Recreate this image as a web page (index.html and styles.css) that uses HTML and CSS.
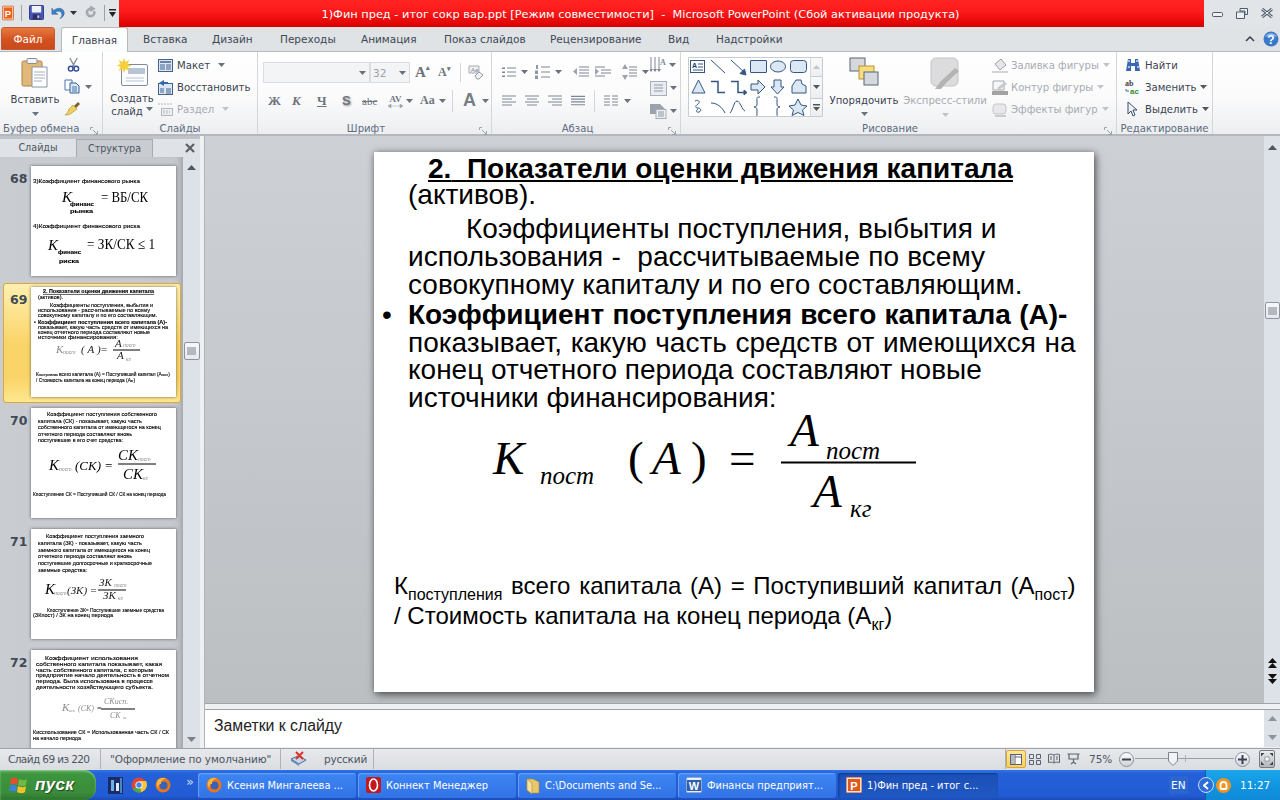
FILE: index.html
```html
<!DOCTYPE html>
<html lang="ru">
<head>
<meta charset="utf-8">
<title>PowerPoint</title>
<link rel="stylesheet" href="styles.css">
</head>
<body>
<svg class="defs" width="0" height="0">
  <symbol id="arr" viewBox="0 0 7 4"><path d="M0 0h7L3.500 4z"/></symbol>
  <symbol id="lines" viewBox="0 0 15 12"><path d="M0 1h15M0 4h15M0 7h15M0 10h15" stroke="#7d8794" stroke-width="1.200"/></symbol>
  <symbol id="ff" viewBox="0 0 16 16"><circle cx="8" cy="8" r="7.500" fill="#e8761c"/><circle cx="8.500" cy="8.500" r="4" fill="#3b62b5"/><path d="M2 5C3 1 8 0 11 2 8 2 6 4 6 7 4 7 3 8 4 11 2 10 1 7 2 5z" fill="#f6b73c"/></symbol>
</svg>

<div class="app">
  <header class="titlebar">
    <div class="qat">
      <svg class="q-ppt" width="12" height="16" viewBox="0 0 14 17"><rect x=".5" y=".5" width="13" height="16" rx="1" fill="#fde7da" stroke="#d9622b"/><rect x="2" y="2" width="10" height="13" fill="#e8641e"/><text x="7" y="13" class="ppt-letter">P</text></svg>
      <span class="qat-sep q-s1"></span>
      <svg class="q-save" width="15" height="15" viewBox="0 0 16 16"><rect x=".5" y=".5" width="15" height="15" rx="1" fill="#4a57b8" stroke="#2c3480"/><rect x="3" y="1" width="10" height="7" fill="#eef2fa"/><rect x="4" y="10" width="8" height="5" fill="#2b3061"/><rect x="9" y="11" width="2" height="3" fill="#c9cfe8"/></svg>
      <svg class="q-undo" width="15" height="15" viewBox="0 0 17 16"><path d="M3 6c3-4 11-4 12 2 .4 3-2 6-5 7 2-2 3-4 2-6-1-3-5-3-7-1l3 2H1V3z" fill="#3d7fc4" stroke="#24568f" stroke-width=".5"/></svg>
      <svg class="arr-qat" width="7" height="4"><use href="#arr"/></svg>
      <svg class="q-redo" width="14" height="15" viewBox="0 0 15 16"><path d="M12 7A5 5 0 1 1 7 3V1l5 3-5 3V5a3 3 0 1 0 3 2z" fill="#a5abb1" stroke="#8d939a" stroke-width=".5"/></svg>
      <span class="qat-sep q-s2"></span>
      <svg class="arr-custom" width="7" height="8" viewBox="0 0 7 8"><path d="M0 0h7v1.500H0zM0 3h7L3.500 8z"/></svg>
    </div>
    <div class="title-red">1)Фин пред - итог сокр вар.ppt [Режим совместимости]&nbsp; -&nbsp; Microsoft PowerPoint (Сбой активации продукта)</div>
    <div class="winbtns">
      <svg class="w-min" width="11" height="5" viewBox="0 0 11 5"><rect x=".5" y=".5" width="10" height="4" rx="1" fill="#eef0f2" stroke="#4f5c6e"/></svg>
      <svg width="12" height="11" viewBox="0 0 12 11"><path d="M4 .5h7.500v6H9V3H4zM.5 4H8.500v6.500H.5z" fill="#eef0f2" stroke="#4f5c6e"/></svg>
      <svg width="12" height="10" viewBox="0 0 12 10"><path d="M1 1l10 8M11 1L1 9" stroke="#4f5c6e" stroke-width="3"/><path d="M1 1l10 8M11 1L1 9" stroke="#eef0f2" stroke-width="1"/></svg>
    </div>
  </header>

  <nav class="tabs">
    <span class="tab-file">Файл</span>
    <span class="tab tab-active">Главная</span>
    <span class="tab t1">Вставка</span>
    <span class="tab t2">Дизайн</span>
    <span class="tab t3">Переходы</span>
    <span class="tab t4">Анимация</span>
    <span class="tab t5">Показ слайдов</span>
    <span class="tab t6">Рецензирование</span>
    <span class="tab t7">Вид</span>
    <span class="tab t8">Надстройки</span>
    <span class="tabs-right">
      <svg width="10" height="6" viewBox="0 0 10 6"><path d="M1 5l4-4 4 4" fill="none" stroke="#39424e" stroke-width="1.500"/></svg>
      <svg width="16" height="16" viewBox="0 0 16 16"><circle cx="8" cy="8" r="7.500" fill="#3a78c9"/><path d="M2 6a6.500 6 0 0 1 12 0C10 4 6 4 2 6z" fill="#8db6ea"/><text x="8" y="12.500" class="help-q">?</text></svg>
    </span>
  </nav>

  <section class="ribbon">
    <div class="group g-clip">
      <div class="gbody">
        <div class="big big-paste">
          <svg width="28" height="31" viewBox="0 0 28 31"><rect x="1" y="4" width="20" height="25" rx="1.500" fill="#e2b878" stroke="#ac834c"/><rect x="6" y="1.500" width="10" height="5" rx="1" fill="#f3f3f0" stroke="#8d8d8d"/><path d="M11 10h15v20H11z" fill="#fff" stroke="#8894a5"/><path d="M13 15h11M13 18h11M13 21h11M13 24h8" stroke="#a7b0bc"/></svg>
          <span class="big-label">Вставить</span>
          <svg class="arr" width="7" height="4"><use href="#arr"/></svg>
        </div>
        <div class="clip-small">
          <svg class="cl-cut" width="13" height="15" viewBox="0 0 14 16"><path d="M3 1l5 9M11 1L6 10" stroke="#8a8f96" stroke-width="1.500"/><circle cx="4" cy="12.500" r="2.500" fill="none" stroke="#33509a" stroke-width="1.600"/><circle cx="10" cy="12.500" r="2.500" fill="none" stroke="#33509a" stroke-width="1.600"/></svg>
          <span class="clip-row"><svg width="16" height="15" viewBox="0 0 16 15"><path d="M1 1h7v10H1z" fill="#fff" stroke="#4c74ac"/><path d="M6 4h6l3 3v7H6z" fill="#dbe8f7" stroke="#33629f"/><path d="M8 8h5M8 10h5M8 12h5" stroke="#4c74ac"/></svg><svg class="arr" width="7" height="4"><use href="#arr"/></svg></span>
          <svg width="17" height="15" viewBox="0 0 17 15"><path d="M10 5l4-4 2 2-4 4z" fill="#7b5b30"/><path d="M9 4l4 4-4 3C6 14 3 14 1 14c2-1 3-3 4-6z" fill="#f0cf5a" stroke="#a58a35" stroke-width=".6"/></svg>
        </div>
      </div>
      <div class="glabel gl-left"><span class="glabel-text">Буфер обмена</span><svg class="launcher" width="8" height="8" viewBox="0 0 8 8"><path d="M.5 3V.500H3M7.500 7.500L3 3M7.500 4v3.500H4" fill="none" stroke="#9aa3ae"/></svg></div>
    </div>

    <div class="group g-slides">
      <div class="gbody">
        <div class="big big-new">
          <svg width="31" height="29" viewBox="0 0 31 29"><rect x="4.500" y="6.500" width="26" height="21" rx="1.500" fill="#fbfcfd" stroke="#7f8b99"/><rect x="11" y="10" width="17" height="6" fill="#b9c4d4"/><path d="M9 20h18M9 23h18" stroke="#b9c4d4"/><path d="M7 0l1.500 4 4-2-2 4 4 1.500-4 1.500 2 4-4-2L7 15l-1.500-4-4 2 2-4L0 7.500l3.500-1.500-2-4 4 2z" fill="#f3cf3a"/></svg>
          <span class="big-label">Создать</span>
          <span class="big-label">слайд <svg class="arr" width="7" height="4"><use href="#arr"/></svg></span>
        </div>
        <div class="smalls">
          <div class="srow"><svg width="15" height="13" viewBox="0 0 15 13"><rect x=".5" y=".5" width="14" height="12" fill="#dde7f3" stroke="#42618c"/><path d="M2 3h11" stroke="#42618c" stroke-width="1.500"/><rect x="2" y="5" width="5" height="6" fill="#8ba5c7"/><path d="M8 6h5M8 8h5M8 10h5" stroke="#42618c"/></svg><span>Макет</span><svg class="arr" width="7" height="4"><use href="#arr"/></svg></div>
          <div class="srow"><svg width="15" height="15" viewBox="0 0 15 15"><rect x=".5" y="3.500" width="14" height="11" fill="#dde7f3" stroke="#42618c"/><rect x="2" y="8" width="4" height="5" fill="#8ba5c7"/><path d="M8 9h5M8 11h5M8 13h5" stroke="#42618c"/><path d="M6 0L1 3l5 3V4h4V2H6z" fill="#3168ae"/></svg><span>Восстановить</span></div>
          <div class="srow disabled"><svg width="15" height="13" viewBox="0 0 15 13"><rect x="3.500" y="5.500" width="11" height="7" fill="#efeff0" stroke="#b4b7bb"/><path d="M0 1h15M5 8h7M5 10h7" stroke="#b4b7bb" stroke-dasharray="2 1"/></svg><span>Раздел</span><svg class="arr" width="7" height="4"><use href="#arr"/></svg></div>
        </div>
      </div>
      <div class="glabel"><span class="glabel-text">Слайды</span></div>
    </div>

    <div class="group g-font">
      <div class="gbody column">
        <div class="font-row1">
          <span class="combo c-name"><svg class="arr" width="7" height="4"><use href="#arr"/></svg></span>
          <span class="combo c-size"><span>32</span><svg class="arr" width="7" height="4"><use href="#arr"/></svg></span>
          <span class="fglyph f-a1">A<sup>▴</sup></span>
          <span class="fglyph f-a2">A<sup>▾</sup></span>
          <span class="vsep"></span>
          <svg width="16" height="15" viewBox="0 0 16 15"><path d="M1 1h10v7H1z" fill="#eef0f3" stroke="#a5abb3"/><text x="3" y="7" class="clear-txt">Aa</text><path d="M7 11l4-4 4 3-4 4H9z" fill="#f2f2f4" stroke="#9298a2"/></svg>
        </div>
        <div class="font-row2">
          <span class="fb fb1">Ж</span><span class="fb fb2"><i>К</i></span><span class="fb fb3"><u>Ч</u></span><span class="fb fb4">S</span><span class="fb fb5"><s>abc</s></span>
          <span class="fb6"><span class="av">AV</span><svg width="15" height="4" viewBox="0 0 15 4"><path d="M0 2l3-2v4zM15 2l-3-2v4zM3 2h9" fill="#9ba1a9" stroke="#9ba1a9" stroke-width=".5"/></svg></span><svg class="arr" width="7" height="4"><use href="#arr"/></svg>
          <span class="fb fb7">Aa</span><svg class="arr" width="7" height="4"><use href="#arr"/></svg>
          <span class="vsep short"></span>
          <span class="fb fb8">A</span><svg class="arr" width="7" height="4"><use href="#arr"/></svg>
        </div>
      </div>
      <div class="glabel gl-launch"><span class="glabel-text">Шрифт</span><svg class="launcher" width="8" height="8" viewBox="0 0 8 8"><path d="M.5 3V.500H3M7.500 7.500L3 3M7.500 4v3.500H4" fill="none" stroke="#9aa3ae"/></svg></div>
    </div>

    <div class="group g-para">
      <div class="gbody">
        <div class="para-main">
          <div class="para-row1">
            <svg class="p1" width="14" height="12" viewBox="0 0 14 12"><path d="M0 1.500h3v1.500H0zM0 5.500h3V7H0zM0 9.500h3V11H0z" fill="#7d8794"/><path d="M5 2h9M5 6h9M5 10h9" stroke="#7d8794"/></svg><svg class="arr" width="7" height="4"><use href="#arr"/></svg>
            <svg class="p2" width="15" height="14" viewBox="0 0 15 14"><path d="M6 2h9M6 7h9M6 12h9" stroke="#7d8794"/><path d="M1 0h2v4H1zM0 5.500h3V9H0zM0 10.500h3V14H0z" fill="#8f97a2"/></svg><svg class="arr" width="7" height="4"><use href="#arr"/></svg>
            <svg class="p3" width="16" height="12" viewBox="0 0 16 12"><path d="M6 1h10M6 4h10M6 7h10M6 10h10" stroke="#7d8794"/><path d="M0 5.500L4 2v7z" fill="#9ca3ad"/></svg>
            <svg class="p4" width="16" height="12" viewBox="0 0 16 12"><path d="M0 1h10M6 4h10M6 7h10M0 10h10" stroke="#7d8794"/><path d="M4 5.500L0 2v7z" fill="#9ca3ad"/></svg>
            <svg class="p5" width="15" height="16" viewBox="0 0 15 16"><path d="M7 3h8M7 6h8M7 9h8M7 12h8" stroke="#7d8794"/><path d="M3 0l3 5H0zM3 16l3-5H0z" fill="#9ca3ad"/></svg><svg class="arr" width="7" height="4"><use href="#arr"/></svg>
          </div>
          <div class="para-row2">
            <svg width="14" height="12" viewBox="0 0 14 12"><path d="M0 1h14M0 4h10M0 7h14M0 10h10" stroke="#7d8794" stroke-width="1.200"/></svg>
            <svg width="14" height="12" viewBox="0 0 14 12"><path d="M0 1h14M2 4h10M0 7h14M2 10h10" stroke="#7d8794" stroke-width="1.200"/></svg>
            <svg width="14" height="12" viewBox="0 0 14 12"><path d="M0 1h14M4 4h10M0 7h14M4 10h10" stroke="#7d8794" stroke-width="1.200"/></svg>
            <svg width="14" height="12"><use href="#lines"/></svg>
            <span class="vsep short"></span>
            <svg width="14" height="12" viewBox="0 0 14 12"><path d="M0 1h6M8 1h6M0 4h6M8 4h6M0 7h6M8 7h6M0 10h6M8 10h6" stroke="#7d8794" stroke-width="1.200"/></svg><svg class="arr" width="7" height="4"><use href="#arr"/></svg>
          </div>
        </div>
        <div class="para-side">
          <span class="ps-row"><svg width="16" height="17" viewBox="0 0 16 17"><path d="M1 0v14M5 0v14M9 0v14" stroke="#7d8794"/><path d="M-1 12l2 3 2-3M3 12l2 3 2-3M7 12l2 3 2-3" fill="#7d8794"/><text x="10" y="8" class="dir-a">A</text></svg><svg class="arr" width="7" height="4"><use href="#arr"/></svg></span>
          <span class="ps-row"><svg width="17" height="15" viewBox="0 0 17 15"><rect x=".5" y=".5" width="16" height="14" fill="#e9edf1" stroke="#a7afb8"/><path d="M4 4h9M4 7h9M4 10h9" stroke="#8f98a3"/></svg><svg class="arr" width="7" height="4"><use href="#arr"/></svg></span>
          <span class="ps-row"><svg width="17" height="15" viewBox="0 0 17 15"><path d="M0 0h10l5 5-5 5H0z" fill="#9ba2ab"/><rect x="6" y="5.500" width="10" height="9" fill="#eef0f3" stroke="#a7afb8"/><path d="M8 8h6M8 10h6M8 12h6" stroke="#8f98a3"/></svg><svg class="arr" width="7" height="4"><use href="#arr"/></svg></span>
        </div>
      </div>
      <div class="glabel gl-launch"><span class="glabel-text">Абзац</span><svg class="launcher" width="8" height="8" viewBox="0 0 8 8"><path d="M.5 3V.500H3M7.500 7.500L3 3M7.500 4v3.500H4" fill="none" stroke="#9aa3ae"/></svg></div>
    </div>

    <div class="group g-draw">
      <div class="gbody">
        <div class="gallery">
          <svg class="shapes" width="121" height="58" viewBox="0 0 121 58" fill="#dbe7f5" stroke="#34567f">
            <rect x="1.500" y="2.500" width="14" height="12" fill="#fff"/><text x="3" y="10" class="g-a">A</text><path d="M9 6h5M9 9h5M4 12h10" fill="none"/>
            <path d="M22 2l14 13" fill="none"/>
            <path d="M42 2l13 12" fill="none"/><path d="M57 17l-6-1.500 4.500-4.500z" fill="#34567f"/>
            <rect x="61.500" y="2.500" width="16" height="12" rx=".5"/>
            <ellipse cx="89" cy="8.500" rx="7.500" ry="5.500"/>
            <rect x="101.500" y="2.500" width="16" height="12" rx="3"/>
            <path d="M9.500 22L16 35H3z"/>
            <path d="M22 23.500h7v11h7" fill="none" stroke-width="1.500"/>
            <path d="M42 23.500h7v11h6" fill="none" stroke-width="1.500"/><path d="M55 32l3 2.500-3 2.500z" fill="#34567f"/>
            <path d="M62 26h7v-4l7 7-7 7v-4h-7z"/>
            <path d="M85 22h7v7h3l-6.500 7-6.500-7h3z"/>
            <path d="M103 28l4-6h5l1 4 4 2v7h-14z"/>
            <path d="M6 43c3-2 6 1 3 3s-3 4 0 4 4 3 1 4-3-2-1-3" fill="none"/>
            <path d="M22 45c6 0 11 4 14 10" fill="none"/>
            <path d="M41 55c3-3 4-12 7-12s5 9 8 10" fill="none"/>
            <path d="M71 42c-4 0-3 1-3 4v3c0 2-1 3-3 3 2 0 3 1 3 3v3c0 3-1 4 3 4" fill="none" transform="translate(0 -3)"/>
            <path d="M85 42c4 0 3 1 3 4v3c0 2 1 3 3 3-2 0-3 1-3 3v3c0 3 1 4-3 4" fill="none" transform="translate(0 -3)"/>
            <path d="M109 41l3 6 6 1-4.500 4 1.500 5.500-6-3-6 3 1.500-5.500-4.500-4 6-1z"/>
          </svg>
          <div class="gal-scroll">
            <span class="gs gs-up"><svg width="7" height="4" viewBox="0 0 7 4"><path d="M0 4h7L3.500 0z" fill="#c2c7ce"/></svg></span>
            <span class="gs gs-mid"><svg class="arr" width="7" height="4"><use href="#arr"/></svg></span>
            <span class="gs"><svg width="7" height="7" viewBox="0 0 7 7"><path d="M0 0h7v1.500H0zM0 3h7L3.500 7z" fill="#555"/></svg></span>
          </div>
        </div>
        <div class="big big-order">
          <svg class="ord" width="30" height="29" viewBox="0 0 30 29"><rect x="1" y="1" width="15" height="13" fill="#d5d9de" stroke="#596474"/><rect x="10" y="9" width="15" height="13" fill="#f6dd80" stroke="#b3962f"/><rect x="15" y="15" width="14" height="13" fill="#d5d9de" stroke="#596474"/></svg>
          <span class="big-label">Упорядочить</span>
          <svg class="arr" width="7" height="4"><use href="#arr"/></svg>
        </div>
        <div class="big big-styles disabled">
          <svg width="30" height="32" viewBox="0 0 30 32"><rect x="1" y="1" width="27" height="28" rx="5" fill="#dcdbdd" stroke="#c4c3c6"/><path d="M29 14L16 26l-5 6h-6l6-8 14-13z" fill="#b6b4b2"/></svg>
          <span class="big-label">Экспресс-стили</span>
          <svg class="arr" width="7" height="4"><use href="#arr"/></svg>
        </div>
        <div class="smalls shape-fx disabled">
          <div class="srow"><svg width="16" height="15" viewBox="0 0 16 15"><path d="M3 6l6-5 5 6-6 5z" fill="#e7e7e9" stroke="#9c9ea2"/><path d="M0 13h16v2H0z" fill="#d3d4d6"/></svg><span>Заливка фигуры</span><svg class="arr" width="7" height="4"><use href="#arr"/></svg></div>
          <div class="srow"><svg width="16" height="15" viewBox="0 0 16 15"><path d="M1 1h11v9H1z" fill="#f7f7f8" stroke="#a4a6aa"/><path d="M5 8l8-6 2 2-8 6z" fill="#c8c9cc"/><path d="M0 11h16v4H0z" fill="#a3a3a3"/></svg><span>Контур фигуры</span><svg class="arr" width="7" height="4"><use href="#arr"/></svg></div>
          <div class="srow"><svg width="16" height="15" viewBox="0 0 16 15"><rect x="1" y="2" width="13" height="10" rx="3" fill="#e8e8ea" stroke="#c4c5c8"/><path d="M3 14h11" stroke="#ccc" stroke-width="2"/></svg><span>Эффекты фигур</span><svg class="arr" width="7" height="4"><use href="#arr"/></svg></div>
        </div>
      </div>
      <div class="glabel gl-launch"><span class="glabel-text">Рисование</span><svg class="launcher" width="8" height="8" viewBox="0 0 8 8"><path d="M.5 3V.500H3M7.500 7.500L3 3M7.500 4v3.500H4" fill="none" stroke="#9aa3ae"/></svg></div>
    </div>

    <div class="group g-edit">
      <div class="gbody">
        <div class="smalls edit-rows">
          <div class="srow"><svg width="16" height="14" viewBox="0 0 16 14"><path d="M3 1h3v4h4V1h3l2 12H10V8H6v5H1z" fill="#3869b0"/><path d="M3 3h2M11 3h2M3 9h2M12 9h2" stroke="#c7dbf3" stroke-width="1.500"/></svg><span>Найти</span></div>
          <div class="srow"><svg class="abac" width="16" height="15" viewBox="0 0 16 15"><text x="0" y="6" class="ab">ab</text><text x="5" y="14" class="ac">ac</text><path d="M1 9v2h3" fill="none" stroke="#3869b0"/></svg><span>Заменить</span><svg class="arr" width="7" height="4"><use href="#arr"/></svg></div>
          <div class="srow"><svg width="16" height="15" viewBox="0 0 16 15"><path d="M3 0v12l3-3 2 5 2-1-2-5h4z" fill="#eef3fa" stroke="#3a4c66"/></svg><span>Выделить</span><svg class="arr" width="7" height="4"><use href="#arr"/></svg></div>
        </div>
      </div>
      <div class="glabel"><span class="glabel-text">Редактирование</span></div>
    </div>
  </section>

  <main class="main">
    <aside class="panel">
      <div class="panel-tabs">
        <span class="ptab ptab-on">Слайды</span>
        <span class="ptab">Структура</span>
        <svg class="panel-x" width="10" height="10" viewBox="0 0 10 10"><path d="M1 1l8 8M9 1L1 9" stroke="#5a6068" stroke-width="2.200"/></svg>
      </div>
      <div class="panel-body">
        <div class="thumbs">
          <div class="trow">
            <span class="tnum">68</span>
            <svg class="thumb" width="145" height="110" viewBox="0 0 145 110">
              <text x="2" y="17" class="tt" textLength="107" lengthAdjust="spacingAndGlyphs">3)Коэффициент   финансового   рынка</text>
              <text x="31" y="36" class="tf ti">К</text><text x="39" y="40" class="tt tb" textLength="24" lengthAdjust="spacingAndGlyphs">финанс</text><text x="39" y="47" class="tt tb" textLength="23" lengthAdjust="spacingAndGlyphs">рынка</text><text x="70" y="36" class="tf" textLength="47" lengthAdjust="spacingAndGlyphs">= ВБ/СК</text>
              <text x="2" y="62" class="tt" textLength="107" lengthAdjust="spacingAndGlyphs">4)Коэффициент   финансового   риска</text>
              <text x="17" y="84" class="tf ti">К</text><text x="27" y="88" class="tt tb" textLength="23" lengthAdjust="spacingAndGlyphs">финанс</text><text x="28" y="97" class="tt tb" textLength="20" lengthAdjust="spacingAndGlyphs">риска</text><text x="56" y="83" class="tf" textLength="68" lengthAdjust="spacingAndGlyphs">= ЗК/СК ≤ 1</text>
            </svg>
          </div>
          <div class="trow trow-sel">
            <span class="tnum">69</span>
            <svg class="thumb" width="145" height="110" viewBox="0 0 145 110">
              <text x="12" y="6" class="tt tb tu" textLength="111" lengthAdjust="spacingAndGlyphs">2.  Показатели оценки движения капитала</text>
              <text x="7" y="12" class="tt" textLength="25" lengthAdjust="spacingAndGlyphs">(активов).</text>
              <text x="19" y="20" class="tt" textLength="103" lengthAdjust="spacingAndGlyphs">Коэффициенты поступления, выбытия и</text>
              <text x="7" y="25" class="tt" textLength="112" lengthAdjust="spacingAndGlyphs">использования -  рассчитываемые по всему</text>
              <text x="7" y="30" class="tt" textLength="119" lengthAdjust="spacingAndGlyphs">совокупному капиталу и по его составляющим.</text>
              <text x="3" y="37" class="tt tb">•</text>
              <text x="7" y="37" class="tt tb" textLength="129" lengthAdjust="spacingAndGlyphs">Коэффициент поступления всего капитала (А)-</text>
              <text x="7" y="42" class="tt" textLength="130" lengthAdjust="spacingAndGlyphs">показывает, какую часть средств от имеющихся на</text>
              <text x="7" y="47" class="tt" textLength="112" lengthAdjust="spacingAndGlyphs">конец отчетного периода составляют новые</text>
              <text x="7" y="52" class="tt" textLength="80" lengthAdjust="spacingAndGlyphs">источники финансирования:</text>
              <text x="25" y="66" class="tf5 ti tgrey">К</text><text x="32" y="67" class="tt ti tgrey">пост</text><text x="50" y="66" class="tf5 ti">( А )</text><text x="70" y="66" class="tf5">=</text>
              <text x="84" y="60" class="tf5 ti">А</text><text x="92" y="60" class="tt ti tgrey">пост</text><path d="M82 63h27" stroke="#000"/><text x="86" y="72" class="tf5 ti">А</text><text x="95" y="74" class="tt ti tgrey">кг</text>
              <text x="5" y="89" class="t48" textLength="134" lengthAdjust="spacingAndGlyphs">К<tspan class="tsub">поступления</tspan> всего капитала (А) = Поступивший капитал (А<tspan class="tsub">пост</tspan>)</text>
              <text x="5" y="95" class="t48" textLength="99" lengthAdjust="spacingAndGlyphs">/ Стоимость капитала на конец периода (А<tspan class="tsub">кг</tspan>)</text>
            </svg>
          </div>
          <div class="trow">
            <span class="tnum">70</span>
            <svg class="thumb" width="145" height="110" viewBox="0 0 145 110">
              <text x="16" y="8" class="tt" textLength="110" lengthAdjust="spacingAndGlyphs">Коэффициент   поступления   собственного</text>
              <text x="7" y="15" class="tt" textLength="104" lengthAdjust="spacingAndGlyphs">капитала  (СК)  - показывает,  какую  часть</text>
              <text x="7" y="21" class="tt" textLength="123" lengthAdjust="spacingAndGlyphs">собственного капитала от имеющегося  на конец</text>
              <text x="7" y="28" class="tt" textLength="94" lengthAdjust="spacingAndGlyphs">отчетного  периода составляют вновь</text>
              <text x="7" y="34" class="tt" textLength="85" lengthAdjust="spacingAndGlyphs">поступившие в его счет средства:</text>
              <text x="18" y="62" class="tf ti">К</text><text x="28" y="63" class="tt ti tgrey">пост</text><text x="44" y="62" class="tf3 ti">(СК) =</text>
              <text x="87" y="52" class="tf ti">СК</text><text x="107" y="53" class="tt ti tgrey">пост</text><path d="M87 56h38" stroke="#000"/><text x="92" y="71" class="tf ti">СК</text><text x="112" y="72" class="tt ti tgrey">кг</text>
              <text x="2" y="88" class="tt" textLength="133" lengthAdjust="spacingAndGlyphs">Кпоступление СК = Поступивший СК / СК на конец периода</text>
            </svg>
          </div>
          <div class="trow">
            <span class="tnum">71</span>
            <svg class="thumb" width="145" height="110" viewBox="0 0 145 110">
              <text x="15" y="9" class="tt" textLength="98" lengthAdjust="spacingAndGlyphs">Коэффициент   поступления   заемного</text>
              <text x="7" y="16" class="tt" textLength="104" lengthAdjust="spacingAndGlyphs">капитала  (ЗК)  - показывает,  какую  часть</text>
              <text x="7" y="23" class="tt" textLength="112" lengthAdjust="spacingAndGlyphs">заемного  капитала  от имеющегося на конец</text>
              <text x="7" y="29" class="tt" textLength="94" lengthAdjust="spacingAndGlyphs">отчетного  периода составляют вновь</text>
              <text x="7" y="36" class="tt" textLength="114" lengthAdjust="spacingAndGlyphs">поступившие долгосрочные и краткосрочные</text>
              <text x="7" y="43" class="tt" textLength="49" lengthAdjust="spacingAndGlyphs">заемные  средства:</text>
              <text x="14" y="65" class="tf ti">К</text><text x="23" y="66" class="tt ti tgrey">пост</text><text x="36" y="65" class="tf5 ti">(ЗК) =</text>
              <text x="68" y="57" class="tf5 ti">ЗК</text><text x="83" y="58" class="tt ti tgrey">пост</text><path d="M67 61h28" stroke="#000"/><text x="72" y="70" class="tf5 ti">ЗК</text><text x="87" y="71" class="tt ti tgrey">кг</text>
              <text x="16" y="83" class="tt" textLength="117" lengthAdjust="spacingAndGlyphs">Кпоступление ЗК= Поступившие заемные средства</text>
              <text x="2" y="88" class="tt" textLength="80" lengthAdjust="spacingAndGlyphs">(ЗКпост) / ЗК на конец периода</text>
            </svg>
          </div>
          <div class="trow">
            <span class="tnum">72</span>
            <svg class="thumb" width="145" height="110" viewBox="0 0 145 110">
              <text x="14" y="10" class="tt" textLength="93" lengthAdjust="spacingAndGlyphs">Коэффициент использования</text>
              <text x="5" y="16" class="tt" textLength="126" lengthAdjust="spacingAndGlyphs">собственного капитала показывает,   какая</text>
              <text x="5" y="22" class="tt" textLength="117" lengthAdjust="spacingAndGlyphs">часть собственного   капитала, с которым</text>
              <text x="5" y="27" class="tt" textLength="133" lengthAdjust="spacingAndGlyphs">предприятие  начало деятельность  в отчетном</text>
              <text x="5" y="33" class="tt" textLength="117" lengthAdjust="spacingAndGlyphs">периода.  Была  использована  в процессе</text>
              <text x="5" y="39" class="tt" textLength="117" lengthAdjust="spacingAndGlyphs">деятельности  хозяйствующего  субъекта.</text>
              <text x="31" y="61" class="tf5 ti tgrey">К</text><text x="38" y="62" class="tsm ti tgrey">исп</text><text x="47" y="61" class="tf4 ti tgrey">(СК)</text><text x="66" y="61" class="tf4">=</text>
              <text x="73" y="54" class="tf4 ti tgrey">СКисп.</text><path d="M70 59h34" stroke="#000"/><text x="79" y="68" class="tf4 ti tgrey">СК</text><text x="92" y="69" class="tsm ti tgrey">кг</text>
              <text x="2" y="84" class="tt" textLength="136" lengthAdjust="spacingAndGlyphs">Кисспользование СК = Использованная часть СК / СК</text>
              <text x="2" y="90" class="tt" textLength="48" lengthAdjust="spacingAndGlyphs">на начало периода</text>
            </svg>
          </div>
        </div>
        <div class="vscroll vs-left">
          <svg width="9" height="5" viewBox="0 0 9 5"><path d="M0 5h9L4.500 0z" fill="#50565e"/></svg>
          <span class="vthumb vt-left"><svg width="9" height="8" viewBox="0 0 9 8"><path d="M0 1h9M0 3h9M0 5h9M0 7h9" stroke="#7c8187"/></svg></span>
          <svg class="vs-down" width="9" height="5" viewBox="0 0 9 5"><path d="M0 0h9L4.500 5z" fill="#7c8187"/></svg>
        </div>
      </div>
    </aside>

    <div class="work">
      <div class="work-top">
        <div class="stage">
          <article class="slide">
            <p class="ln title-ln"><u><b>2.</b>&nbsp; <b>Показатели оценки движения капитала</b></u></p>
            <p class="ln ind tight">(активов).</p>
            <p class="ln ind ind2 gap1">Коэффициенты поступления, выбытия и</p>
            <p class="ln ind ws">использования -&nbsp; рассчитываемые по всему</p>
            <p class="ln ind">совокупному капиталу и по его составляющим.</p>
            <p class="ln ind gap2 bullet ws"><b>Коэффициент поступления всего капитала (А)-</b></p>
            <p class="ln ind ws2">показывает, какую часть средств от имеющихся на</p>
            <p class="ln ind">конец отчетного периода составляют новые</p>
            <p class="ln ind">источники финансирования:</p>
            <svg class="formula" width="470" height="115" viewBox="0 0 470 115">
              <text x="1" y="62" class="fm fm-i">К</text>
              <text x="48" y="72" class="fm-s fm-i">пост</text>
              <text x="136" y="62" class="fm">(</text>
              <text x="160" y="62" class="fm fm-i">А</text>
              <text x="199" y="62" class="fm">)</text>
              <text x="237" y="62" class="fm">=</text>
              <text x="298" y="34" class="fm fm-i">А</text>
              <text x="334" y="47" class="fm-s fm-i">пост</text>
              <path d="M289 50.500h135" stroke="#000" stroke-width="2"/>
              <text x="321" y="95" class="fm fm-i">А</text>
              <text x="358" y="105" class="fm-s fm-i">кг</text>
            </svg>
            <p class="note note1">К<sub>поступления</sub> всего капитала (А) = Поступивший капитал (А<sub>пост</sub>)</p>
            <p class="note">/ Стоимость капитала на конец периода (А<sub>кг</sub>)</p>
          </article>
        </div>
        <div class="vscroll vs-right">
          <svg width="9" height="5" viewBox="0 0 9 5"><path d="M0 5h9L4.500 0z" fill="#50565e"/></svg>
          <span class="vthumb vt-right"><svg width="9" height="8" viewBox="0 0 9 8"><path d="M0 1h9M0 3h9M0 5h9M0 7h9" stroke="#7c8187"/></svg></span>
          <span class="dbl"><svg width="9" height="10" viewBox="0 0 9 10"><path d="M0 5h9L4.500 0zM0 10h9L4.500 5z" fill="#111"/></svg><svg width="9" height="10" viewBox="0 0 9 10"><path d="M0 0h9L4.500 5zM0 5h9L4.500 10z" fill="#111"/></svg></span>
        </div>
      </div>
      <div class="notes">
        <div class="notes-text">Заметки к слайду</div>
        <div class="vscroll vs-notes">
          <svg width="9" height="5" viewBox="0 0 9 5"><path d="M0 5h9L4.500 0z" fill="#8d9598"/></svg>
          <svg width="9" height="5" viewBox="0 0 9 5"><path d="M0 0h9L4.500 5z" fill="#8d9598"/></svg>
        </div>
      </div>
    </div>
  </main>

  <footer class="status">
    <span class="st st1">Слайд 69 из 220</span>
    <span class="st st2">"Оформление по умолчанию"</span>
    <span class="st st3"><svg width="17" height="16" viewBox="0 0 17 16"><path d="M1 8l7-3 8 4-7 4z" fill="#c7d5e8" stroke="#4d6a95"/><path d="M1 8v2l8 5v-2z" fill="#6f8db8"/><path d="M6 1l7 7M13 1L6 8" stroke="#d8352a" stroke-width="2"/></svg><span class="lang">русский</span></span>
    <span class="st-right">
      <span class="view view-on"><svg width="12" height="11" viewBox="0 0 12 11"><rect x=".5" y=".5" width="11" height="10" fill="#fff" stroke="#5a6471"/><path d="M5 1v9M5 3h6" stroke="#5a6471"/><rect x="1" y="1" width="3" height="9" fill="#b5bcc6"/></svg></span>
      <span class="view"><svg width="12" height="11" viewBox="0 0 12 11"><path d="M.5.5h4v4h-4zM7.500.5h4v4h-4zM.5 6.500h4v4h-4zM7.500 6.500h4v4h-4z" fill="none" stroke="#5a6471"/></svg></span>
      <span class="view"><svg width="12" height="12" viewBox="0 0 12 12"><path d="M6 2C4 1 2 1 .5 1.500v8c2-.5 4-.5 5.500.5 1.500-1 3.500-1 5.500-.5v-8C10 1 8 1 6 2zM6 2v8M2 4h2M2 6h2M8 4h2M8 6h2" fill="none" stroke="#5a6471"/></svg></span>
      <span class="view"><svg width="13" height="12" viewBox="0 0 13 12"><path d="M.5 1h12M2 1v5h9V1M6.500 6v3M4 11l2.500-2L9 11" fill="none" stroke="#5a6471" stroke-width="1.200"/></svg></span>
      <span class="zoom-pct">75%</span>
      <span class="zbtn"><svg width="9" height="3"><path d="M0 1.500h9" stroke="#39424e" stroke-width="2"/></svg></span>
      <span class="slider"><span class="tick"></span><svg class="sthumb" width="10" height="14" viewBox="0 0 10 14"><path d="M.5.500h9V9L5 13.500.5 9z" fill="#f1f3f5" stroke="#7b838c"/></svg></span>
      <span class="zbtn"><svg width="9" height="9"><path d="M0 4.500h9M4.500 0v9" stroke="#39424e" stroke-width="2"/></svg></span>
      <span class="fit"><svg width="12" height="12" viewBox="0 0 12 12"><path d="M0 0h3.500L0 3.500zM12 0H8.500L12 3.500zM0 12h3.500L0 8.500zM12 12H8.500L12 8.500z" fill="#3d444c"/><rect x="4" y="4" width="4" height="4" fill="#fff" stroke="#555" stroke-width=".5"/></svg></span>
    </span>
  </footer>

  <div class="taskbar">
    <div class="start">
      <svg width="20" height="18" viewBox="0 0 20 18"><path d="M2 3c3-2 5-1 7 0L8 9C6 8 4 7 1 9z" fill="#e84d2e"/><path d="M10 3c2 1 5 2 8 0l-1 6c-3 2-6 1-8 0z" fill="#70b943"/><path d="M1 10c3-2 5-1 7 0l-1 6c-2-1-4-2-7 0z" fill="#3a83dd"/><path d="M9 10c2 1 5 2 8 0l-1 6c-3 2-6 1-8 0z" fill="#f5c22e"/></svg>
      <span class="start-txt">пуск</span>
    </div>
    <div class="quick">
      <svg width="15" height="17" viewBox="0 0 15 17"><rect width="15" height="17" fill="#1d2a68"/><rect x="3" y="3" width="3" height="11" fill="#6bb2e8"/><rect x="8" y="6" width="3" height="8" fill="#dfe9f2"/><rect x="12" y="1" width="2" height="15" fill="#4a85c5"/></svg>
      <svg width="16" height="16" viewBox="0 0 16 16"><circle cx="8" cy="8" r="7.500" fill="#dc4437"/><path d="M8 8L1.500 12A7.500 7.500 0 0 0 11 15z" fill="#4ca84f"/><path d="M8 4h7a7.500 7.500 0 0 1-5 11z" fill="#f6c636"/><circle cx="8" cy="8" r="3.600" fill="#fff"/><circle cx="8" cy="8" r="2.700" fill="#4985e8"/></svg>
      <svg width="16" height="16"><use href="#ff"/></svg>
      <span class="chev">»</span>
    </div>
    <div class="tasks">
      <span class="task"><svg width="16" height="16"><use href="#ff"/></svg><span class="task-t">Ксения Мингалеева ...</span></span>
      <span class="task"><svg width="15" height="16" viewBox="0 0 15 16"><rect width="15" height="16" rx="2" fill="#c2191f"/><ellipse cx="7.500" cy="8" rx="4" ry="6" fill="none" stroke="#fff" stroke-width="1.600"/></svg><span class="task-t">Коннект Менеджер</span></span>
      <span class="task"><svg width="14" height="17" viewBox="0 0 14 17"><path d="M1 2h6l6 3v11H5l-4-3z" fill="#e8c869" stroke="#a8873a" stroke-width=".6"/><path d="M1 2l5 4v11l-5-4z" fill="#f6e09a" stroke="#a8873a" stroke-width=".6"/></svg><span class="task-t">C:\Documents and Se...</span></span>
      <span class="task"><svg width="16" height="16" viewBox="0 0 16 16"><rect width="16" height="16" fill="#e9eff7" stroke="#3a64a7"/><rect x="1" y="3" width="14" height="11" fill="#2c5fae"/><text x="8" y="12.500" class="w-letter">W</text></svg><span class="task-t">Финансы предприят...</span></span>
      <span class="task task-on"><svg width="16" height="16" viewBox="0 0 16 16"><rect width="16" height="16" rx="1" fill="#fbe3d5" stroke="#c9481b"/><rect x="2" y="2" width="12" height="12" fill="#dd5a1c"/><text x="8" y="12.500" class="w-letter">P</text></svg><span class="task-t">1)Фин пред - итог с...</span></span>
    </div>
    <span class="en">EN</span>
    <div class="tray">
      <span class="tray-back"><svg width="6" height="9" viewBox="0 0 6 9"><path d="M5 1L1 4.500 5 8" fill="none" stroke="#fff" stroke-width="2"/></svg></span>
      <svg width="15" height="15" viewBox="0 0 15 15"><circle cx="7.500" cy="7.500" r="7.500" fill="#f3941e"/><path d="M4.500 11V7a3 3 0 0 1 6 0v4M4.500 11h6" fill="none" stroke="#fff" stroke-width="1.800"/></svg>
      <span class="clock">11:27</span>
    </div>
  </div>
</div>
</body>
</html>
```

FILE: styles.css
```css
* { box-sizing: border-box; }
html, body { margin: 0; padding: 0; }
body { width: 1280px; height: 800px; overflow: hidden; font-family: "DejaVu Sans", sans-serif; font-size: 10.5px; color: #3b4350; background: #e2e5e8; }
p { margin: 0; }
svg { display: block; flex: none; }
.defs { position: absolute; }
.arr { fill: #69717c; flex: none; }
.app { display: flex; flex-direction: column; width: 1280px; height: 800px; }

/* title bar */
.titlebar { display: flex; height: 27px; background: #e2e5e8; }
.qat { width: 119px; display: flex; align-items: center; padding-bottom: 2px; }
.qat-sep { width: 1px; height: 16px; background: #9aa1aa; }
.q-ppt { margin-left: 2px; }
.q-s1 { margin-left: 7px; }
.q-save { margin-left: 7px; }
.q-undo { margin-left: 7px; }
.arr-qat { fill: #333; margin-left: 4px; }
.q-redo { margin-left: 7px; }
.q-s2 { margin-left: 6px; }
.arr-custom { fill: #222; margin-left: 4px; }
.ppt-letter, .w-letter { font: bold 11px "Liberation Sans", sans-serif; fill: #fff; text-anchor: middle; }
.title-red { width: 1085px; background: linear-gradient(#ff2323, #ff1b1b 40%, #d90000); color: #fff; font-size: 11.350px; line-height: 29px; text-align: center; white-space: nowrap; padding-right: 42px; }
.winbtns { flex: 1; display: flex; gap: 13px; padding: 8px 0 0 8px; align-items: flex-start; }
.w-min { margin-top: 4px; }

/* tabs */
.tabs { display: flex; height: 25px; background: #dfe3e6; border-bottom: 1px solid #b5b9be; position: relative; align-items: flex-end; }
.tab-file { width: 54px; margin-left: 1px; height: 23px; margin-bottom: 1px; background: linear-gradient(#e77a40, #d3521f 55%, #c94a1c); border: 1px solid #c55a30; border-radius: 3px 3px 0 0; color: #fff; text-align: center; line-height: 22px; }
.tab { height: 24px; line-height: 24px; white-space: nowrap; color: #3e4754; }
.tab-active { width: 67px; margin-left: 6px; margin-bottom: -1px; height: 25px; background: linear-gradient(#fff, #fbfcfd); border: 1px solid #b5b9be; border-bottom: 0; border-radius: 3px 3px 0 0; text-align: center; }
.t1 { margin-left: 15px; width: 69px; }
.t2 { width: 68px; }
.t3 { width: 81px; }
.t4 { width: 83px; }
.t5 { width: 106px; }
.t6 { width: 118px; }
.t7 { width: 48px; }
.t8 { width: 90px; }
.tabs-right { margin-left: auto; display: flex; align-items: center; gap: 8px; height: 24px; padding-right: 1px; }
.help-q { font: bold 12px "Liberation Sans", sans-serif; fill: #fff; text-anchor: middle; }

/* ribbon */
.ribbon { display: flex; height: 85px; background: linear-gradient(#fff, #fbfbfc 55%, #eceef0); border-bottom: 2px solid #b4b8bd; font-size: 10.100px; }
.group { display: flex; flex-direction: column; border-right: 1px solid #d3d6da; flex: none; }
.gbody { flex: 1; display: flex; min-height: 0; }
.gbody.column { flex-direction: column; }
.glabel { height: 14px; position: relative; text-align: center; line-height: 17px; color: #5d6b80; white-space: nowrap; }
.gl-left { text-align: left; padding-left: 3px; }
.gl-launch { padding-right: 17px; }
.launcher { position: absolute; right: 4px; bottom: -1px; }
.g-clip { width: 103px; }
.g-slides { width: 155px; }
.g-font { width: 234px; }
.g-para { width: 189px; }
.g-draw { width: 436px; }
.g-edit { width: 96px; }
.big { display: flex; flex-direction: column; align-items: center; flex: none; }
.big-label { line-height: 13px; white-space: nowrap; display: flex; align-items: center; gap: 3px; }
.big-paste { width: 60px; margin-left: 5px; padding-top: 5px; }
.big-paste svg:first-child { margin-bottom: 5px; }
.big-paste .arr { margin-top: 6px; }
.clip-small { display: flex; flex-direction: column; align-items: flex-start; gap: 7px; padding: 5px 0 0 0; margin-left: -1px; }
.cl-cut { margin-left: 3px; }
.clip-row { display: flex; align-items: center; gap: 5px; }
.big-new { width: 52px; margin-left: 3px; padding-top: 6px; }
.big-new svg:first-child { margin-bottom: 5px; }
.smalls { display: flex; flex-direction: column; padding-top: 2px; }
.srow { height: 22px; display: flex; align-items: center; gap: 4px; white-space: nowrap; }
.srow .arr { margin-left: 1px; }
.g-slides .srow .arr { margin-left: 4px; }
.disabled { color: #a7abb1; }
.disabled .arr { fill: #c0c4c9; }

.font-row1 { display: flex; align-items: center; padding: 10px 0 0 5px; height: 31px; }
.combo { height: 21px; background: #f3f4f6; border: 1px solid #d9dde1; display: flex; align-items: center; justify-content: flex-end; padding-right: 3px; color: #9ba1a9; font-size: 10.500px; }
.c-name { width: 107px; }
.c-size { width: 40px; justify-content: space-between; padding-left: 2px; }
.fglyph { font: bold 15px "Liberation Serif", serif; color: #6d747d; display: flex; align-items: flex-start; }
.fglyph sup { font-size: 7px; line-height: 8px; margin-left: 0; }
.f-a1 { margin-left: 5px; width: 23px; }
.f-a2 { width: 22px; font-size: 12px; }
.vsep { width: 1px; height: 19px; background: #d3d6da; margin: 0 7px 0 0; }
.vsep.short { height: 22px; }
.clear-txt { font: 6px "Liberation Sans", sans-serif; fill: #7d8794; }
.font-row2 { display: flex; align-items: center; padding: 7px 0 0 10px; height: 28px; color: #6e757e; }
.fb { font: bold 13px "Liberation Serif", serif; display: block; white-space: nowrap; }
.fb1 { width: 24px; }
.fb2 { width: 25px; }
.fb3 { width: 25px; }
.fb4 { width: 20px; font-family: "Liberation Sans", sans-serif; text-shadow: 1px 1px 2px #999; }
.fb5 { width: 25px; font-size: 11px; font-weight: normal; }
.fb6 { display: flex; flex-direction: column; align-items: center; width: 17px; margin-right: 2px; }
.av { font: bold 9px "Liberation Serif", serif; line-height: 10px; }
.fb7 { width: 18px; margin-left: 7px; margin-right: 1px; font-size: 12px; }
.font-row2 .vsep { margin: 0 10px 0 6px; }
.fb8 { font-size: 18px; font-family: "Liberation Sans", sans-serif; width: 16px; margin-right: 3px; color: #777d85; }

.para-main { width: 158px; padding: 10px 0 0 10px; }
.para-row1 { display: flex; align-items: center; height: 20px; }
.para-row1 .arr { margin-left: 5px; }
.para-row1 .p2 { margin-left: 7px; }
.para-row1 .p3 { margin-left: 11px; }
.para-row1 .p4 { margin-left: 6px; }
.para-row1 .p5 { margin-left: 11px; }
.para-row2 { display: flex; align-items: center; gap: 9px; margin-top: 9px; height: 20px; }
.para-row2 .vsep { margin: 0; }
.para-row2 .arr { margin-left: -3px; }
.para-side { display: flex; flex-direction: column; gap: 5px; padding-top: 4px; }
.ps-row { display: flex; align-items: center; gap: 3px; height: 18px; }

.gallery { display: flex; width: 135px; height: 60px; margin: 5px 0 0 7px; border: 1px solid #c7ccd3; background: #fff; flex: none; border-radius: 1px; }
.g-a { font: bold 7px "Liberation Sans", sans-serif; fill: #1e3a6b; stroke: none; }
.gal-scroll { display: flex; flex-direction: column; width: 13px; margin-left: auto; border-left: 1px solid #d5d9de; }
.gs { flex: 1; display: flex; align-items: center; justify-content: center; background: linear-gradient(#f8f9fa, #eceef1); }
.gs-mid { border-top: 1px solid #c7ccd3; border-bottom: 1px solid #c7ccd3; flex: 1.2; }
.gs-mid .arr { fill: #555; }
.big-order { width: 72px; margin-left: 5px; padding-top: 5px; }
.big-order svg:first-child { margin-bottom: 8px; }
.big-order .arr { margin-top: 5px; }
.big-styles { width: 82px; margin-left: 4px; padding-top: 5px; }
.big-styles svg:first-child { margin-bottom: 5px; }
.big-styles .arr { margin-top: 6px; }
.shape-fx { margin-left: 6px; }
.shape-fx .srow { gap: 3px; }
.edit-rows { padding-left: 8px; }
.edit-rows .arr { margin-left: 0; fill: #555; }
.ab { font: bold 8px "Liberation Serif", serif; fill: #444; }
.ac { font: bold 8px "Liberation Sans", sans-serif; fill: #2f8f2f; }
.dir-a { font: bold 8px "Liberation Serif", serif; fill: #7d8794; }

/* main */
.main { display: flex; height: 612px; background: #eef0f2; }
.panel { width: 200px; display: flex; flex-direction: column; background: #dfe2e6; flex: none; }
.panel-tabs { display: flex; height: 21px; border-top: 3px solid #c0c4c9; position: relative; background: #dfe3e7; }
.ptab { width: 77px; height: 18px; line-height: 17px; font-size: 9.600px; text-align: center; border: 1px solid #a7abb1; border-bottom: 0; color: #4b5562; background: #c9cdd2; margin-left: -1px; }
.ptab-on { background: #dfe3e7; border: 0; margin-left: 0; width: 76px; margin-right: 1px; }
.panel-x { margin-left: auto; margin-right: 5px; margin-top: 4px; }
.panel-body { flex: 1; display: flex; min-height: 0; }
.thumbs { width: 183px; background: linear-gradient(90deg, #c9cdd2, #c5c9ce); overflow: hidden; padding-top: 9px; box-shadow: inset -8px 0 8px -8px #888; }
.trow { display: flex; height: 121px; padding-left: 31px; position: relative; }
.trow-sel::before { content: ""; position: absolute; left: 3px; top: -4px; width: 176px; height: 118px; background: linear-gradient(#fff0b0, #fbd469 50%, #fbd469 80%, #ffe790); border: 1px solid #d6a83e; border-radius: 3px; }
.tnum { position: absolute; left: 10px; top: 5px; font-size: 12.500px; font-weight: bold; color: #414a55; z-index: 1; }
.thumb { background: #fff; position: relative; box-shadow: 0 0 3px rgba(0, 0, 0, .55); filter: blur(.35px); }
.tt { font: 5.200px "Liberation Sans", sans-serif; fill: #000; stroke: #000; stroke-width: .12; }
.t48 { font: 4.800px "Liberation Sans", sans-serif; fill: #000; stroke: #000; stroke-width: .12; }
.tsub { font-size: 3.200px; }
.tsm { font: 4px "Liberation Serif", serif; }
.tb { font-weight: bold; }
.tu { text-decoration: underline; }
.tf { font: 15px "Liberation Serif", serif; fill: #000; }
.tf3 { font: 13px "Liberation Serif", serif; fill: #000; }
.tf5 { font: 11px "Liberation Serif", serif; fill: #222; }
.tf4 { font: 8px "Liberation Serif", serif; fill: #222; }
.ti { font-style: italic; }
.tgrey { fill: #8a8a8a; stroke: none; }
.vscroll { display: flex; flex-direction: column; align-items: center; background: #dde1e8; flex: none; }
.vs-left { width: 17px; padding-top: 8px; }
.vthumb { display: flex; align-items: center; justify-content: center; background: linear-gradient(#f7f8fa, #e6e9ee); border: 1px solid #8d949d; border-radius: 2px; }
.vt-left { width: 16px; height: 18px; margin-top: 172px; }
.vs-down { margin-top: auto; margin-bottom: 6px; }

.work { flex: 1; display: flex; flex-direction: column; margin-left: 4px; border-left: 1px solid #b0b4b9; min-width: 0; }
.work-top { display: flex; height: 568px; border-bottom: 1px solid #a0a4a9; }
.stage { flex: 1; padding: 16px 0 0 169px; background: linear-gradient(#cdd0d5, #bcbfc2); overflow: hidden; }
.slide { width: 720px; height: 540px; background: #fff; box-shadow: 2px 3px 8px rgba(0, 0, 0, .5), 0 0 6px rgba(0, 0, 0, .25); font-family: "Liberation Sans", sans-serif; color: #000; font-size: 28px; padding-top: 3px; position: relative; }
.ln { line-height: 27.600px; white-space: nowrap; }
.ws { word-spacing: .5px; }
.ws2 { word-spacing: .8px; }
.title-ln { padding-left: 54px; }
.ind { padding-left: 34px; }
.ind2 { padding-left: 92px; }
.tight { margin-top: -1.500px; }
.gap1 { margin-top: 6.500px; }
.gap2 { margin-top: 3px; }
.bullet::before { content: "•"; position: absolute; left: 8px; }
.formula { margin: 0 0 0 118px; overflow: visible; }
.fm { font: 47px "Liberation Serif", serif; fill: #000; }
.fm-s { font: 25px "Liberation Serif", serif; fill: #000; }
.fm-i { font-style: italic; }
.note { font-size: 24px; padding-left: 20px; line-height: 30px; white-space: nowrap; }
.note sub { font-size: 16px; line-height: 0; }
.note1 { margin-top: 44px; word-spacing: 2px; }
.vs-right { width: 16px; padding-top: 9px; }
.vt-right { width: 15px; height: 17px; margin-top: 152px; }
.dbl { display: flex; flex-direction: column; gap: 6px; margin-top: auto; margin-bottom: 19px; }
.notes { display: flex; height: 38px; margin-top: 5px; background: #fff; border-top: 1px solid #a0a4a9; }
.notes-text { flex: 1; font-family: "Liberation Sans", sans-serif; font-size: 15.800px; color: #222; padding: 7px 0 0 9px; }
.vs-notes { width: 16px; justify-content: space-between; padding: 6px 0 7px; }

/* status */
.status { display: flex; height: 22px; align-items: stretch; background: linear-gradient(#e7e9ec, #dadde1); border-top: 1px solid #a0a4a9; white-space: nowrap; color: #4c5461; padding-bottom: 1px; }
.st { display: flex; align-items: center; border-right: 1px solid #aeb2b8; }
.st1 { width: 101px; padding-left: 8px; letter-spacing: -.600px; }
.st2 { width: 180px; padding-left: 9px; letter-spacing: -.100px; }
.st3 { width: 93px; padding-left: 9px; }
.lang { margin-left: 17px; letter-spacing: -.200px; }
.st-right { margin-left: auto; display: flex; align-items: center; width: 275px; border-left: 1px solid #aeb2b8; }
.view { width: 20px; height: 18px; margin-right: -1px; display: flex; align-items: center; justify-content: center; }
.view-on { background: linear-gradient(#ffe79a, #fbcf5e); border: 1px solid #d3a73e; border-radius: 2px; }
.zoom-pct { margin-left: 7px; width: 30px; }
.zbtn { width: 15px; height: 15px; border-radius: 50%; background: linear-gradient(#fdfdfe, #cfd3d8); border: 1px solid #8a9098; display: flex; align-items: center; justify-content: center; flex: none; }
.slider { width: 99px; height: 14px; position: relative; display: block; margin: 0 1px; }
.slider::before { content: ""; position: absolute; left: 0; right: 0; top: 6px; height: 1px; background: #9aa0a8; }
.tick { position: absolute; left: 50px; top: 3px; width: 1px; height: 7px; background: #aab0b7; }
.sthumb { position: absolute; left: 33px; top: 0; }
.fit { width: 16px; height: 18px; margin-left: 9px; background: linear-gradient(#eceded, #b3b6ba); border: 1px solid #777d85; border-radius: 2px; display: flex; align-items: center; justify-content: center; }

/* taskbar */
.taskbar { display: flex; align-items: center; height: 30px; background: linear-gradient(#2e74e8 0, #2460d8 12%, #225cd5 85%, #1b4bb5); color: #fff; }
.start { width: 96px; height: 30px; display: flex; align-items: center; gap: 6px; padding-left: 9px; background: linear-gradient(#57a557, #3d953e 15%, #3a8d3a 75%, #2d742e); border-radius: 0 12px 12px 0; box-shadow: inset 0 1px 2px #8fd08f; flex: none; }
.start-txt { font: italic bold 17px "Liberation Sans", sans-serif; color: #fff; text-shadow: 1px 1px 1px #1c4a1c; letter-spacing: .300px; }
.quick { display: flex; align-items: center; gap: 8px; width: 102px; padding-left: 12px; flex: none; }
.chev { margin: -8px 0 0 7px; font-size: 13px; color: #c7dcf8; }
.tasks { display: flex; gap: 2px; width: 800px; flex: none; }
.task { width: 158px; height: 25px; display: flex; align-items: center; gap: 5px; padding-left: 8px; background: linear-gradient(#3d86f3, #3272e6); border-radius: 3px; box-shadow: inset 1px 1px 1px #6aa4f6; white-space: nowrap; overflow: hidden; }
.task-on { background: linear-gradient(#1b4fb5, #1f58c4); box-shadow: inset 1px 1px 2px #123b8d; width: 160px; }
.task-t { font-size: 9.900px; }
.en { margin-left: 171px; padding: 3px 2px; background: #2b66cf; font-size: 10.500px; }
.tray { margin-left: auto; width: 75px; height: 30px; display: flex; align-items: center; background: linear-gradient(#19a8ea, #1295e0 50%, #0f8ad8); border-left: 1px solid #0e5ab0; }
.tray-back { width: 16px; height: 16px; border-radius: 50%; margin-left: -8px; margin-right: 2px; background: #2b6fd6; border: 1px solid #c8dcf5; display: flex; align-items: center; justify-content: center; }
.clock { margin-left: 9px; font-size: 10.500px; }
```
